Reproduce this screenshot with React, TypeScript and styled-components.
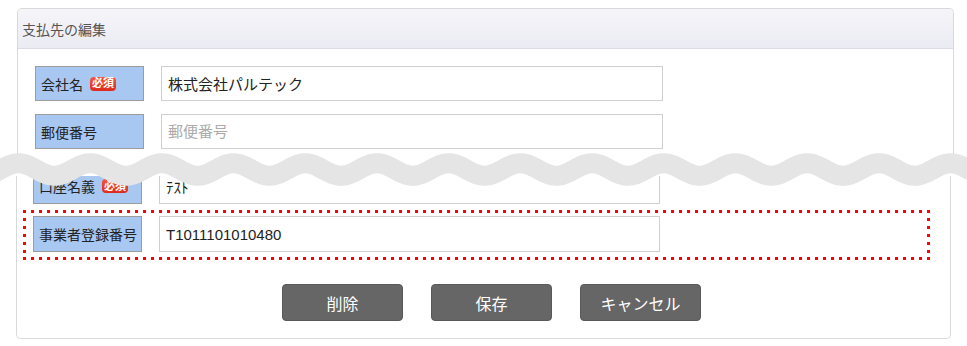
import React from 'react';
import styled, { createGlobalStyle } from 'styled-components';

const GlobalStyle = createGlobalStyle`
  html, body { margin: 0; padding: 0; background: #fff; }
  body {
    font-family: "Liberation Sans", "Noto Sans CJK JP", sans-serif;
    color: #222;
  }
`;

const Page = styled.div`
  position: relative;
  width: 967px;
  height: 346px;
  overflow: hidden;
  background: #fff;
`;

// one piece of the spliced screenshot
const Slice = styled.div<{ $height: number }>`
  height: ${(p) => p.$height}px;
  overflow: hidden;
`;

const Panel = styled.div<{ $left: number; $width: number; $part: 'top' | 'bottom' }>`
  box-sizing: border-box;
  margin-left: ${(p) => p.$left}px;
  margin-top: ${(p) => (p.$part === 'top' ? 8 : 0)}px;
  width: ${(p) => p.$width}px;
  border: 1px solid #d9d9d9;
  ${(p) =>
    p.$part === 'top'
      ? 'border-bottom: none; border-radius: 5px 5px 0 0;'
      : 'border-top: none; border-radius: 0 0 5px 5px;'}
  background: #fff;
`;

const Header = styled.div`
  height: 39px;
  display: flex;
  align-items: center;
  padding-left: 4px;
  border-bottom: 1px solid #dcdce4;
  border-radius: 4px 4px 0 0;
  background: linear-gradient(#f5f5f9, #ebebf3);
  font-size: 14px;
  color: #555;
`;

const Body = styled.div<{ $pad: string }>`
  padding: ${(p) => p.$pad};
  display: flex;
  flex-direction: column;
  gap: 13px;
`;

const Row = styled.div<{ $shift?: number }>`
  display: flex;
  align-items: center;
  gap: 17px;
  margin-top: ${(p) => p.$shift || 0}px;
`;

const Label = styled.div<{ $h: number }>`
  box-sizing: border-box;
  width: 109px;
  height: ${(p) => p.$h}px;
  display: flex;
  align-items: center;
  padding-left: 5px;
  background: #a8c7f1;
  border: 1px solid #9c9c9c;
  font-size: 14px;
  color: #222;
  white-space: nowrap;
`;

const Required = styled.span`
  display: inline-flex;
  align-items: center;
  height: 14px;
  padding: 0 2px;
  margin-left: 7px;
  border-radius: 4px;
  background: linear-gradient(#f6553f, #dc2a1c);
  color: #fff;
  font-size: 11px;
  font-weight: bold;
  line-height: 1;
`;

const Input = styled.input<{ $h: number; $w: number }>`
  box-sizing: border-box;
  width: ${(p) => p.$w}px;
  height: ${(p) => p.$h}px;
  padding: 0 6px;
  border: 1px solid #cfcfcf;
  background: #fff;
  font-family: inherit;
  font-size: 15px;
  color: #222;
  outline: none;
  &::placeholder { color: #aaa; }
`;

const dots = (dir: string) =>
  `repeating-linear-gradient(${dir}, #f00 0 3px, transparent 3px 8px)`;

const Highlight = styled.div`
  box-sizing: border-box;
  width: 907px;
  margin: -7px 0 0 -10px;
  padding: 6px 10px 8px 10px;
  background:
    ${dots('90deg')} top left / 100% 3px no-repeat,
    ${dots('90deg')} bottom left / 100% 3px no-repeat,
    ${dots('180deg')} top left / 3px 100% no-repeat,
    ${dots('180deg')} top right / 3px 100% no-repeat;
`;

const ButtonBar = styled.div`
  display: flex;
  justify-content: center;
  gap: 28px;
  padding-left: 16px;
  margin-top: 11px;
`;

const Button = styled.button`
  width: 121px;
  height: 37px;
  border: 1px solid #595959;
  border-radius: 4px;
  background: #666;
  color: #fff;
  font-family: inherit;
  font-size: 16px;
  cursor: pointer;
`;

const Wave = styled.svg`
  position: absolute;
  left: 0;
  top: 140px;
`;

const wavePath = (() => {
  const pts: string[] = [];
  for (let x = -20; x <= 990; x += 2) {
    const y = 29.5 - 6.25 * Math.cos((2 * Math.PI * (x - 18.5)) / 71.7);
    pts.push(`${x},${y.toFixed(2)}`);
  }
  return 'M' + pts.join(' L');
})();

export default function App() {
  return (
    <Page>
      <GlobalStyle />
      <Slice $height={158}>
        <Panel $left={17} $width={937} $part="top">
          <Header>支払先の編集</Header>
          <Body $pad="17px 17px 20px 17px">
            <Row>
              <Label $h={35}>
                会社名<Required>必須</Required>
              </Label>
              <Input $h={35} $w={502} defaultValue="株式会社パルテック" />
            </Row>
            <Row>
              <Label $h={35}>郵便番号</Label>
              <Input $h={35} $w={502} placeholder="郵便番号" />
            </Row>
          </Body>
        </Panel>
      </Slice>

      <Slice $height={170} style={{ marginTop: 18 }}>
        <Panel $left={16} $width={935} $part="bottom">
          <Body $pad="0 16px 17px 16px">
            <Row $shift={-8}>
              <Label $h={36}>
                口座名義<Required>必須</Required>
              </Label>
              <Input $h={36} $w={501} defaultValue="ﾃｽﾄ" />
            </Row>
            <Highlight>
              <Row>
                <Label $h={36}>事業者登録番号</Label>
                <Input $h={36} $w={501} defaultValue="T1011101010480" />
              </Row>
            </Highlight>
            <ButtonBar>
              <Button>削除</Button>
              <Button>保存</Button>
              <Button>キャンセル</Button>
            </ButtonBar>
          </Body>
        </Panel>
      </Slice>

      <Wave width="967" height="60" viewBox="0 0 967 60">
        <path d={wavePath} fill="none" stroke="#e5e5e5" strokeWidth="20" />
      </Wave>
    </Page>
  );
}
